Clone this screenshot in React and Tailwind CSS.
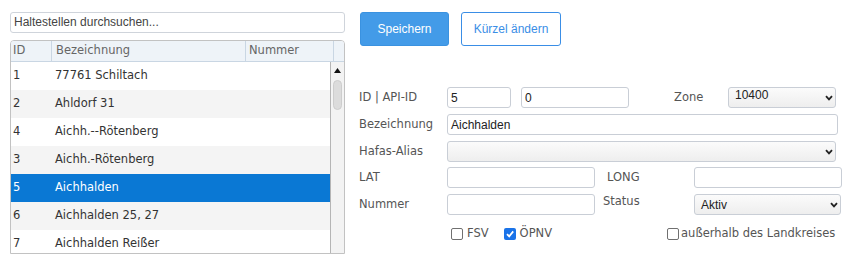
import { useState } from "react";

const stops = [
  { id: 1, name: "77761 Schiltach" },
  { id: 2, name: "Ahldorf 31" },
  { id: 4, name: "Aichh.--Rötenberg" },
  { id: 3, name: "Aichh.-Rötenberg" },
  { id: 5, name: "Aichhalden" },
  { id: 6, name: "Aichhalden 25, 27" },
  { id: 7, name: "Aichhalden Reißer" },
];

const uiFont = { fontFamily: '"DejaVu Sans", sans-serif' };
const inputFont = { fontFamily: '"Liberation Sans", Arial, sans-serif' };

function Chevron() {
  return (
    <svg width="8" height="6" viewBox="0 0 8 6" className="shrink-0">
      <path d="M1 1.2 L4 4.4 L7 1.2" fill="none" stroke="#222" strokeWidth="1.8" />
    </svg>
  );
}

function Select({ value, className = "", textClass = "" }) {
  return (
    <div
      className={`h-[21px] flex items-center justify-between pl-[6px] pr-[2px] border border-[#c9ced6] rounded-[3px] bg-gradient-to-b from-[#fbfbfb] to-[#eeeeee] text-[12px] text-[#222] ${className}`}
      style={inputFont}
    >
      <span className={textClass}>{value}</span>
      <Chevron />
    </div>
  );
}

function TextInput({ value, className = "" }) {
  return (
    <div
      className={`h-[21px] flex items-center px-[3px] border border-[#c9ced6] rounded-[3px] bg-white text-[12px] text-[#222] ${className}`}
      style={inputFont}
    >
      {value}
    </div>
  );
}

function Check({ checked }) {
  if (checked) {
    return (
      <span className="w-[12px] h-[12px] rounded-[2px] bg-[#1a73e8] flex items-center justify-center">
        <svg width="10" height="10" viewBox="0 0 10 10">
          <path d="M2 5.2 L4.2 7.4 L8.2 2.4" fill="none" stroke="white" strokeWidth="1.8" />
        </svg>
      </span>
    );
  }
  return <span className="w-[12px] h-[12px] rounded-[2px] border border-[#707070] bg-white" />;
}

export default function App() {
  const [selected] = useState(5);

  return (
    <div className="w-[853px] h-[254px] overflow-hidden bg-white flex">
      <div className="ml-[10px] mt-[12px] w-[335px] flex flex-col shrink-0">
        <input
          placeholder="Haltestellen durchsuchen..."
          className="h-[21px] border border-[#cfd4db] rounded-[3px] px-[3px] text-[12px] outline-none placeholder:text-[#444]"
          style={inputFont}
        />

        <div className="mt-[7px] border border-[#c2c2c2] rounded-t-[4px] overflow-hidden" style={uiFont}>
          <div className="flex h-[21px] bg-[#eef3f8] border-b border-[#c9d6e3] text-[11.5px] text-[#666]">
            <div className="w-[40px] pl-[2px] flex items-center">ID</div>
            <div className="w-[194px] pl-[4px] flex items-center border-l border-[#c9d6e3]">Bezeichnung</div>
            <div className="w-[88px] pl-[3px] flex items-center border-l border-[#c9d6e3]">Nummer</div>
            <div className="flex-1 border-l border-[#c9d6e3]" />
          </div>

          <div className="flex">
            <div className="w-[319px]">
              {stops.map((stop, i) => {
                const active = stop.id === selected;
                return (
                  <div
                    key={stop.id}
                    className={`h-[28px] flex items-center text-[11.5px] ${
                      active
                        ? "bg-[#0a78d4] text-white"
                        : i % 2 === 1
                        ? "bg-[#f4f4f4] text-[#333]"
                        : "bg-white text-[#333]"
                    }`}
                  >
                    <span className="w-[44px] pl-[2px]">{stop.id}</span>
                    <span>{stop.name}</span>
                  </div>
                );
              })}
            </div>
            <div className="flex-1 border-l border-[#b5b5b5] bg-[#f3f3f3] flex flex-col items-center">
              <svg width="7" height="5" viewBox="0 0 7 5" className="mt-[6px]">
                <path d="M0 5 L3.5 0 L7 5 Z" fill="#111" />
              </svg>
              <div className="mt-[7px] w-[9px] h-[30px] rounded-full bg-[#dcdcdc] border border-[#cdcdcd]" />
            </div>
          </div>
        </div>
      </div>

      <div className="ml-[14px] mt-[12px] flex flex-col" style={uiFont}>
        <div className="flex ml-[1px]" style={inputFont}>
          <button className="w-[89px] h-[34px] rounded-[3px] bg-[#439be8] border border-[#3a92e0] text-white text-[12px]">
            Speichern
          </button>
          <button className="ml-[12px] w-[100px] h-[34px] rounded-[3px] bg-white border border-[#3a8ee6] text-[#3a8ee6] text-[12px]">
            Kürzel ändern
          </button>
        </div>

        <div className="mt-[41px] flex flex-col text-[11.5px] text-[#555]">
          <div className="flex items-center h-[21px]">
            <span className="w-[88px]">ID | API-ID</span>
            <TextInput value="5" className="w-[64px]" />
            <TextInput value="0" className="ml-[10px] w-[108px]" />
            <span className="ml-[45px] w-[54px]">Zone</span>
            <Select value="10400" className="w-[108px]" textClass="-mt-[5px]" />
          </div>

          <div className="flex items-center h-[21px] mt-[6px]">
            <span className="w-[88px]">Bezeichnung</span>
            <TextInput value="Aichhalden" className="w-[391px]" />
          </div>

          <div className="flex items-center h-[21px] mt-[6px]">
            <span className="w-[88px]">Hafas-Alias</span>
            <Select value="" className="w-[389px] from-[#f7f7f7] to-[#ececec]" />
          </div>

          <div className="flex items-center h-[21px] mt-[5px]">
            <span className="w-[88px]">LAT</span>
            <TextInput value="" className="w-[148px]" />
            <span className="ml-[12px] w-[87px]">LONG</span>
            <TextInput value="" className="w-[148px]" />
          </div>

          <div className="flex items-center h-[21px] mt-[6px]">
            <span className="w-[88px]">Nummer</span>
            <TextInput value="" className="w-[148px]" />
            <span className="ml-[8px] w-[91px] -mt-[6px]">Status</span>
            <Select value="Aktiv" className="w-[147px]" />
          </div>

          <div className="flex items-center h-[13px] mt-[12px]">
            <div className="ml-[92px] flex items-center gap-[4px]">
              <Check checked={false} />
              <span>FSV</span>
            </div>
            <div className="ml-[15px] flex items-center gap-[4px]">
              <Check checked />
              <span>ÖPNV</span>
            </div>
            <div className="ml-[115px] flex items-center gap-[2px]">
              <Check checked={false} />
              <span>außerhalb des Landkreises</span>
            </div>
          </div>
        </div>
      </div>
    </div>
  );
}
